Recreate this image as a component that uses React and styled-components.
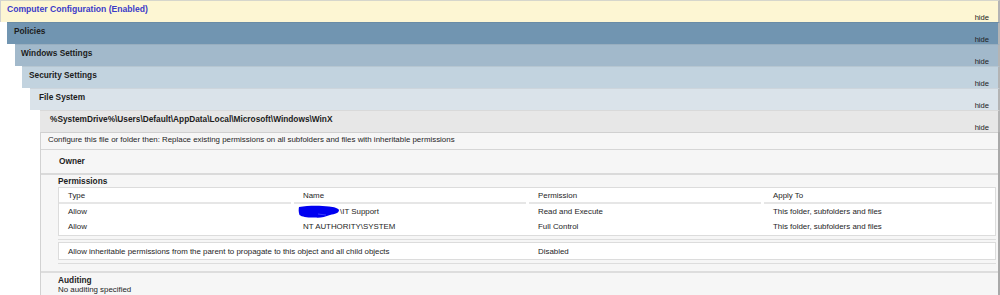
import React from "react";
import styled, { createGlobalStyle } from "styled-components";

const Global = createGlobalStyle`
  html, body {
    margin: 0;
    padding: 0;
    background: #ffffff;
    overflow: hidden;
  }
  body {
    font-family: "Liberation Sans", Arial, sans-serif;
    font-size: 7.9px;
    color: #1e1e1e;
  }
`;

const tones = {
  computer: "#fdf6d3",
  policies: "#7195b1",
  windows: "#a2b9cb",
  security: "#c2d3df",
  files: "#dae3ea",
  path: "#e7e7e7",
};

const Report = styled.div`
  width: 1000px;
  height: 295px;
  overflow: hidden;
`;

const Block = styled.div`
  margin-left: ${({ indent }) => indent || 0}px;
`;

const Header = styled.div`
  height: 22px;
  box-sizing: border-box;
  display: grid;
  grid-template-rows: 13px 9px;
  padding-left: ${({ pad }) => pad || 7}px;
  padding-right: 9px;
  background: ${({ tone }) => tones[tone]};
  border-top: 1px solid ${({ tone }) => (tone === "computer" ? "#d6d6cc" : "rgba(0,0,0,0.06)")};
  border-left: ${({ tone }) => (tone === "computer" ? "1px solid #d0d0d0" : "none")};
  border-right: 2px solid #b4b4b4;
`;

const Label = styled.div`
  font-weight: bold;
  font-size: ${({ blue }) => (blue ? 8.6 : 8.3)}px;
  line-height: 12px;
  padding-top: 2px;
  color: ${({ blue }) => (blue ? "#3b3bc9" : "#1c1c1c")};
  white-space: nowrap;
`;

const Hide = styled.div`
  justify-self: end;
  font-size: 7.6px;
  line-height: 9px;
  margin-top: -1px;
  color: #222;
`;

const Content = styled.div`
  background: #f6f6f6;
  border-left: 1px solid #d2d2d2;
  border-right: 2px solid #a9a9a9;
  height: 200px;
`;

const Note = styled.div`
  height: 16px;
  line-height: 14px;
  padding-left: 7px;
  border-top: 1px solid #d0d0d0;
  border-bottom: 1px solid #d6d6d6;
  white-space: nowrap;
`;

const OwnerRow = styled.div`
  height: 23px;
  line-height: 22px;
  padding-left: 18px;
  font-weight: bold;
  font-size: 8.3px;
  border-bottom: 2px solid #dadada;
`;

const Group = styled.div`
  padding: ${({ top }) => top ?? 2}px 2px 0 17px;
`;

const Title = styled.div`
  font-weight: bold;
  font-size: 8.3px;
  line-height: 10px;
`;

const Line = styled.div`
  line-height: 10px;
`;

const Box = styled.div`
  background: #ffffff;
  border: 1px solid #dcdcdc;
  margin-top: ${({ top }) => top || 0}px;
  padding-bottom: ${({ bottom }) => bottom || 0}px;
`;

const Row = styled.div`
  display: grid;
  grid-template-columns: 235px 235px 235px 1fr;
  height: ${({ h }) => h || 15}px;
  align-items: center;
`;

const Cell = styled.div`
  padding-left: 9px;
  white-space: nowrap;
  display: flex;
  align-items: center;
  ${({ head }) =>
    head &&
    `
    align-self: stretch;
    border-bottom: 2px solid #e6e6e6;
    margin-right: 3px;
    padding-top: 1px;
  `}
`;

const Divider = styled.div`
  margin: ${({ m }) => m || "0"};
  border-top: ${({ w }) => w || 1}px solid #dddddd;
`;

const Redaction = () => (
  <svg width="42" height="14" viewBox="0 0 42 14" style={{ marginLeft: -5, marginRight: 0 }}>
    <path
      d="M1 2 C10 0.5 22 0.5 31 1.5 C36 2 40 3 41 5 C41 8 37 9 32 10 C27 12 22 13 17 12.5 C11 12.8 4 12 1.5 10 C0.5 7 0.5 4 1 2 Z"
      fill="#0000f0"
    />
    <path d="M20 9 L28 10" stroke="#3a3aff" strokeWidth="1" />
  </svg>
);

const permissions = [
  { type: "Allow", name: "\\IT Support", redacted: true, perm: "Read and Execute", apply: "This folder, subfolders and files" },
  { type: "Allow", name: "NT AUTHORITY\\SYSTEM", perm: "Full Control", apply: "This folder, subfolders and files" },
];

function Level({ indent, tone, title, pad, blue, children }) {
  return (
    <Block indent={indent}>
      <Header tone={tone} pad={pad}>
        <Label blue={blue}>{title}</Label>
        <Hide>hide</Hide>
      </Header>
      {children}
    </Block>
  );
}

export default function App() {
  return (
    <>
      <Global />
      <Report>
        <Level tone="computer" title="Computer Configuration (Enabled)" pad={6} blue>
          <Level indent={7} tone="policies" title="Policies">
            <Level indent={8} tone="windows" title="Windows Settings" pad={6}>
              <Level indent={7} tone="security" title="Security Settings">
                <Level indent={8} tone="files" title="File System" pad={9}>
                  <Level indent={10} tone="path" pad={10} title="%SystemDrive%\Users\Default\AppData\Local\Microsoft\Windows\WinX">
                    <Content>
                      <Note>
                        Configure this file or folder then: Replace existing permissions on all subfolders and files with inheritable permissions
                      </Note>
                      <OwnerRow>Owner</OwnerRow>
                      <Group top={1}>
                        <Title>Permissions</Title>
                        <Box top={1} bottom={1}>
                          <Row h={16}>
                            <Cell head>Type</Cell>
                            <Cell head>Name</Cell>
                            <Cell head>Permission</Cell>
                            <Cell head>Apply To</Cell>
                          </Row>
                          {permissions.map((p, i) => (
                            <Row key={i} h={15}>
                              <Cell>{p.type}</Cell>
                              <Cell>
                                {p.redacted && <Redaction />}
                                {p.name}
                              </Cell>
                              <Cell>{p.perm}</Cell>
                              <Cell>{p.apply}</Cell>
                            </Row>
                          ))}
                        </Box>
                        <Divider m="3px 0 0 0" />
                        <Box top={2}>
                          <Row h={16}>
                            <Cell>Allow inheritable permissions from the parent to propagate to this object and all child objects</Cell>
                            <Cell />
                            <Cell>Disabled</Cell>
                            <Cell />
                          </Row>
                        </Box>
                        <Divider m="3px 0 0 0" />
                      </Group>
                      <Divider w={2} m="7px 0 0 0" />
                      <Group>
                        <Title>Auditing</Title>
                        <Line>No auditing specified</Line>
                      </Group>
                    </Content>
                  </Level>
                </Level>
              </Level>
            </Level>
          </Level>
        </Level>
      </Report>
    </>
  );
}
